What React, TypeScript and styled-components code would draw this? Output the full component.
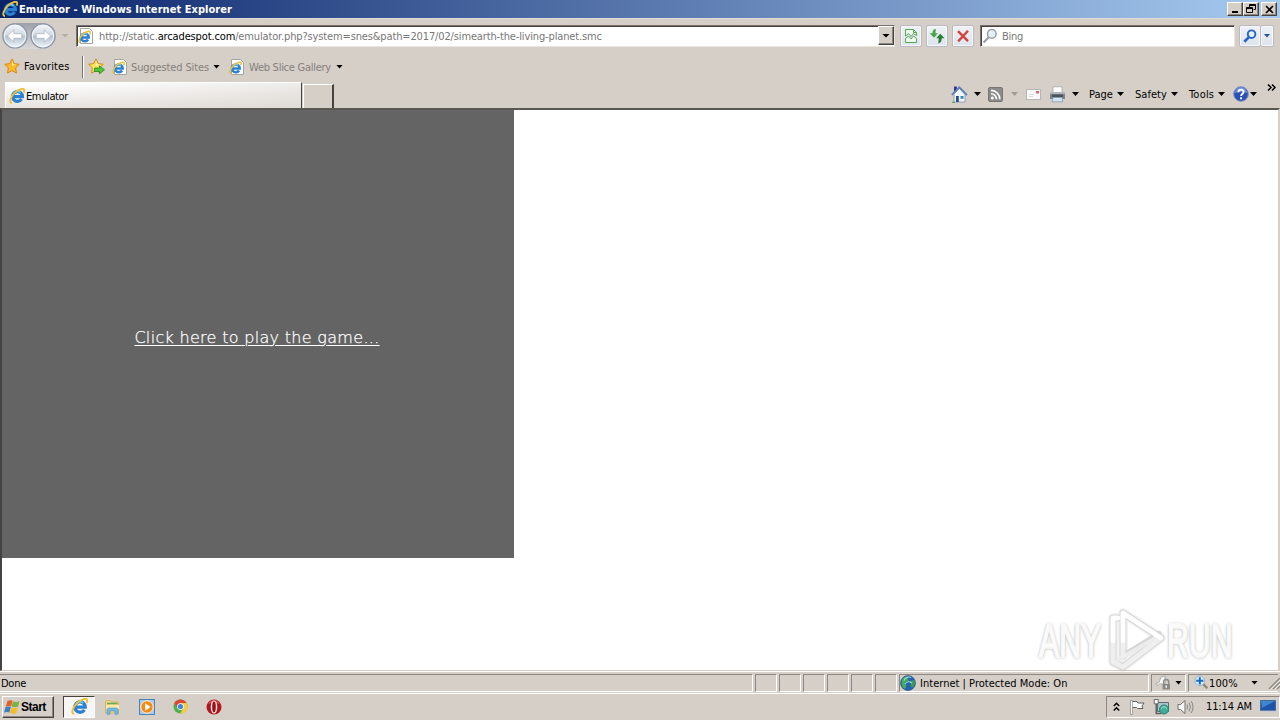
import React from 'react';
import styled, { createGlobalStyle, css } from 'styled-components';

const IeIcon = ({ size = 16, page = false }: { size?: number; page?: boolean }) => (
  <svg width={size} height={size} viewBox='0 0 16 16'>
    {page && <path d='M2.5.5h9l3 3v12h-12z' fill='#fff' stroke='#a5a5a0' />}
    <g transform={page ? 'translate(0 2.6) scale(.8)' : undefined}>
      <path
        d='M12.600 11.200a4.900 4.900 0 1 1 .8-2.600H5.200'
        fill='none'
        stroke='#2a80d2'
        strokeWidth='3.200'
      />
      <path d='M4 7.200a4.800 4.800 0 0 1 7.600-2.600' fill='none' stroke='#6ccaf6' strokeWidth='1.600' />
      <path
        d='M3 15C-.4 15 1.500 8.500 6.100 4.400C10 1 14.600-.3 15.200 1.900c.2.900-.2 1.900-.7 2.700'
        fill='none'
        stroke='#ecc03a'
        strokeWidth='1.900'
      />
    </g>
  </svg>
);

const StarIcon = ({ add = false }: { add?: boolean }) => (
  <svg width='17' height='17' viewBox='0 0 17 17'>
    <path
      d='M8 .9l2.200 4.700 5.100.7-3.700 3.600.9 5.200L8 12.600l-4.500 2.500.9-5.200L.7 6.300l5.100-.7z'
      fill={add ? '#fbe65c' : '#fbb829'}
      stroke='#d68a16'
    />
    <path d='M8 3l1.300 3.300 3 .5-4.300 1z' fill='#fff3a8' />
    {add && (
      <path d='M6.500 10h5V7.800l5 4-5 4v-2.300h-5z' fill='#55c43c' stroke='#208a23' strokeWidth='.8' />
    )}
  </svg>
);

const ArrowCircle = ({ forward = false }: { forward?: boolean }) => (
  <svg width='26' height='26' viewBox='0 0 26 26'>
    <defs>
      <linearGradient id='glass' x1='0' y1='0' x2='0' y2='1'>
        <stop offset='0' stopColor='#f4f6f9' />
        <stop offset='.46' stopColor='#d3dae3' />
        <stop offset='.5' stopColor='#b4c0ce' />
        <stop offset='1' stopColor='#eff8fc' />
      </linearGradient>
    </defs>
    <circle cx='13' cy='13' r='12' fill='url(#glass)' stroke='#8793a4' strokeWidth='1.2' />
    <circle cx='13' cy='13' r='10.700' fill='none' stroke='#f5f8fb' strokeWidth='1' />
    <path
      d='M5.500 13l6.300-6.200v3.900h8v4.600h-8v3.900z'
      fill='#fff'
      stroke='#a3afbd'
      strokeWidth='.7'
      transform={forward ? 'rotate(180 13 13)' : undefined}
    />
  </svg>
);

const CompatIcon = () => (
  <svg width='14' height='16' viewBox='0 0 14 16'>
    <path d='M1.500 1.500h8l3 3v3l-3-2-2.500 3-2.500-3-3 2.500z' fill='#eef8ec' stroke='#55a656' />
    <path d='M1.500 14.500v-4l3-2.500 2.500 3 2.500-3 3 2.500v4z' fill='#eef8ec' stroke='#55a656' />
    <path d='M9.500 1.500v3h3' fill='none' stroke='#55a656' />
  </svg>
);

const RefreshIcon = () => (
  <svg width='16' height='16' viewBox='0 0 16 16'>
    <path d='M6.800 1C4.200 1 3.500 3 3.500 5.300H.7L5 9.800l4-4.500H6.500c0-1.700.2-3 .3-4.300z' fill='#4aa44b' />
    <path d='M9.200 15.300c2.600 0 3.500-2.500 3.500-5h2.800l-4.300-4.500-4 4.500h2.500c0 1.700-.3 3.700-.5 5z' fill='#287d2e' />
  </svg>
);

const StopIcon = () => (
  <svg width='14' height='14' viewBox='0 0 14 14'>
    <path d='M2 2.200l10 10M12 1.800L2.200 12.400' stroke='#d2453e' strokeWidth='2.400' fill='none' />
  </svg>
);

const LensIcon = ({ color, fill, bold }: { color: string; fill: string; bold?: boolean }) => (
  <svg width={bold ? 14 : 16} height={bold ? 14 : 16} viewBox='0 0 16 16'>
    <path d='M6.800 9.200L1.500 14.600' stroke={color} strokeWidth={bold ? 3 : 2.2} />
    <circle cx='9.800' cy='5.900' r='4.300' fill={fill} stroke={color} strokeWidth={bold ? 2.2 : 1.5} />
    <path d='M7.600 5.200a2.600 2.600 0 0 1 2-1.700' fill='none' stroke='#fff' />
  </svg>
);

const HomeIcon = () => (
  <svg width='17' height='17' viewBox='0 0 17 17'>
    <path d='M3 .5h2.800V6H3z' fill='#2b3690' />
    <path d='M3 8l5.500-5.500L14 8.500V16H3z' fill='#f3f6fa' stroke='#7a90b2' strokeWidth='.8' />
    <path d='M.8 8.800L8.300 1.300l7.700 7.900' fill='none' stroke='#5b80b4' strokeWidth='1.800' />
    <path d='M5 10h2.800v6H5z' fill='#274b82' />
    <path d='M9.500 10h3v2.800h-3z' fill='#328fb6' />
    <path d='M1 16.300h3' stroke='#49a24a' />
  </svg>
);

const RssIcon = () => (
  <svg width='15' height='15' viewBox='0 0 15 15'>
    <rect x='.5' y='.5' width='14' height='14' rx='1.500' fill='#8d8c8a' stroke='#777573' />
    <circle cx='4.300' cy='10.900' r='1.500' fill='#fff' />
    <path d='M3 6.700a5.400 5.400 0 0 1 5.400 5.500M3 3.400a8.800 8.800 0 0 1 8.800 8.800' fill='none' stroke='#fff' strokeWidth='1.600' />
  </svg>
);

const MailIcon = () => (
  <svg width='15' height='11' viewBox='0 0 15 11'>
    <rect x='.5' y='.5' width='14' height='10' fill='#fbfafa' stroke='#b9b5b2' />
    <path d='M10 2h3v2.500h-3z' fill='#df6871' />
    <path d='M3 5.500h5M3 7.500h4' stroke='#dcdada' />
  </svg>
);

const PrinterIcon = () => (
  <svg width='17' height='17' viewBox='0 0 17 17'>
    <path d='M4 .8h9V7H4z' fill='#fff' stroke='#a7a8aa' strokeWidth='.8' />
    <path d='M1 6h15v7H1z' fill='#7c838b' />
    <path d='M1 6h15v2H1z' fill='#b0b6bb' />
    <path d='M3 8.500h11V11H3z' fill='#4b525a' />
    <path d='M4 11.500h9l1 4.300H3z' fill='#cfe4f5' stroke='#839cb3' strokeWidth='.8' />
  </svg>
);

const HelpIcon = () => (
  <svg width='16' height='16' viewBox='0 0 16 16'>
    <circle cx='8' cy='8' r='7.300' fill='#2b50b4' stroke='#7e91bd' />
    <path d='M2 7a6 6 0 0 1 12 0q-6-2-12 0z' fill='#6f90dc' />
    <path d='M5.400 6.300C5.400 2.800 10.800 2.900 10.600 6c-.1 1.700-2.500 1.900-2.500 4' fill='none' stroke='#fff' strokeWidth='1.800' />
    <path d='M7.100 11.300h2v2h-2z' fill='#fff' />
  </svg>
);

const GlobeIcon = () => (
  <svg width='16' height='16' viewBox='0 0 16 16'>
    <circle cx='8' cy='8' r='7.500' fill='#2463b0' stroke='#244f78' strokeWidth='.6' />
    <path d='M2.200 4.500C4 1.500 7 .8 9 1.500L7.500 4 9 5.500 5 8l1.500 3L5 14C1.500 12 .8 8 2.200 4.500z' fill='#45ac59' />
    <path d='M10 6l4.500-1c1 3 .3 5.500-1.700 7.500L10 11l1-2z' fill='#3c9b58' />
    <path d='M4 5.500a5 5 0 0 1 7-3M5 9q3-4 7-1' fill='none' stroke='#9adcf0' strokeWidth='1.100' />
  </svg>
);

const LockIcon = () => (
  <svg width='17' height='16' viewBox='0 0 17 16'>
    <path d='M.8 8.500l3.200-1 2-5.500 4-1v8H4.500L3 10.500z' fill='#f6f6f6' stroke='#a2a09e' strokeWidth='.8' />
    <path d='M8.700 9V7a2.500 2.500 0 0 1 5 0v2' fill='none' stroke='#8c8a88' strokeWidth='1.400' />
    <path d='M7.500 9h7.500v5.500H7.500z' fill='#8c8a88' />
    <path d='M10.500 10.500h1.500v2.300h-1.500z' fill='#eee' />
  </svg>
);

const ZoomIcon = () => (
  <svg width='15' height='15' viewBox='0 0 15 15'>
    <path d='M8.500 8.500l4.800 4.800' stroke='#8f8375' strokeWidth='2.200' />
    <circle cx='5.800' cy='5.800' r='4.800' fill='#d9edfb' stroke='#94b7d6' />
    <path d='M5.800 2.200v7.200M2.200 5.800h7.200' stroke='#1969c1' strokeWidth='2' />
  </svg>
);

const WindowsFlag = () => (
  <svg width='17' height='16' viewBox='0 0 17 16'>
    <path d='M3.500 2q2.500-1.600 5.100-.2L7 7.500q-2.600-1.200-5.300.2z' fill='#e3622a' />
    <path d='M9 2.200q2.800 1.300 6.500.1L14 7.800q-3.200 1-6.500-.2z' fill='#7cb241' />
    <path d='M1.500 8.300q2.500-1.400 5.300-.2l-1.500 5.500q-2.500-1.300-5.200.2z' fill='#3b7fc7' />
    <path d='M7.300 8.400q3.200 1.300 6.500.2l-1.600 5.600q-3 1.100-6.400-.2z' fill='#f4bd28' />
  </svg>
);

const FolderIcon = () => (
  <svg width='17' height='16' viewBox='0 0 17 16'>
    <path d='M1.500 2.500l1-1h4l1 1.500h7V14h-13z' fill='#f3d67c' stroke='#d2ad4e' strokeWidth='.8' />
    <path d='M3 4.500h10.500' stroke='#63a960' strokeWidth='1.500' />
    <path d='M2 6h13v4H2z' fill='#fbeaa9' />
    <path d='M3 15.300V11q0-2 2-2h7q2 0 2 2v4.300h-3V12H6v3.300z' fill='#72b8e5' stroke='#5196c5' strokeWidth='.6' />
  </svg>
);

const MediaIcon = () => (
  <svg width='16' height='16' viewBox='0 0 16 16'>
    <rect x='.5' y='.5' width='15' height='15' fill='#a8cbec' stroke='#4783bd' />
    <circle cx='8' cy='8' r='6.200' fill='#f58a16' stroke='#fff0d5' />
    <path d='M6.200 4.300l5.300 3.700-5.300 3.700z' fill='#fff' />
  </svg>
);

const ChromeIcon = () => (
  <svg width='15' height='15' viewBox='0 0 16 16'>
    <circle cx='8' cy='8' r='7.500' fill='#4caf50' />
    <path d='M1.500 4.250A7.500 7.500 0 0 1 14.500 4.250L8 5 4.900 9.800z' fill='#dc4638' />
    <path d='M14.500 4.250A7.500 7.500 0 0 1 7.700 15.500L11 9.700 8 4.500z' fill='#fccd35' />
    <circle cx='8' cy='8' r='3.600' fill='#fff' />
    <circle cx='8' cy='8' r='2.800' fill='#4285df' />
  </svg>
);

const OperaIcon = () => (
  <svg width='16' height='16' viewBox='0 0 16 16'>
    <circle cx='8' cy='8' r='7.500' fill='#b3151d' />
    <path d='M2 5a6.500 6.500 0 0 1 12 0q-6-2-12 0z' fill='#d6454a' />
    <ellipse cx='8' cy='8' rx='3.300' ry='6.600' fill='#f5e9e9' />
    <ellipse cx='8' cy='8' rx='1.800' ry='5.400' fill='#941118' />
  </svg>
);

const FlagIcon = () => (
  <svg width='17' height='16' viewBox='0 0 17 16'>
    <path d='M2.500 1.500v14M2.500 2.500h5.500l1 1.500h6l-2 3 1 2.500H8.500l-1-1h-5z' fill='#fff' stroke='#63615e' />
    <path d='M1.500 1.500h2v14h-2z' fill='#fff' stroke='#77756f' strokeWidth='.6' />
  </svg>
);

const NetworkIcon = () => (
  <svg width='17' height='16' viewBox='0 0 17 16'>
    <path d='M4.500 3.500h11v9h-11z' fill='#a8c5ce' stroke='#5d6a6e' />
    <path d='M1.200.5h4v4.300h-4z' fill='#fff' stroke='#5b5e5e' strokeWidth='.9' />
    <path d='M3.200 5v9.500h5' fill='none' stroke='#5b5e5e' strokeWidth='1.400' />
    <circle cx='11' cy='10.500' r='4.500' fill='#3fae98' stroke='#2a7d73' />
    <path d='M8 9.500q3-3.500 6 0' fill='none' stroke='#a9ecd3' />
  </svg>
);

const SpeakerIcon = () => (
  <svg width='17' height='16' viewBox='0 0 17 16'>
    <path d='M1 5.500h2.500l4.500-4v13l-4.500-4H1z' fill='#f6f6f6' stroke='#73716d' />
    <path d='M10 5.500q1.500 2.500 0 5M12 3.500q3 4.500 0 9M14.200 2q3.600 6 0 12' fill='none' stroke='#8a8884' />
  </svg>
);

const DesktopIcon = () => (
  <svg width='16' height='13' viewBox='0 0 16 13'>
    <path d='M.5.500h15v10H.5z' fill='#1c55a9' stroke='#4a6a94' />
    <path d='M1 1h14L2 8z' fill='#3e86d2' />
    <path d='M1 11.500h14' stroke='#c1cbd5' strokeWidth='1.500' />
  </svg>
);

const PlayLogo = () => (
  <svg width='62' height='68' viewBox='0 0 62 68'>
    <g fill='none' strokeLinejoin='round' strokeLinecap='round'>
      <path d='M18 51V8l38 25-38 29L8 57V13h5' stroke='#000' strokeOpacity='.05' strokeWidth='10' />
      <g stroke='#d6d6d6'>
        <path d='M18 51V8l38 25-38 29L8 57V13h5' strokeWidth='7' />
        <path d='M18 51l36-22' strokeWidth='6' />
      </g>
      <path d='M13 55l5-3 36-21' stroke='#ececec' strokeWidth='4' />
      <path d='M18 51V8l38 25-38 29L8 57V13h5' stroke='#efefef' strokeWidth='5' />
      <path d='M8 36V13h5M18 36V8l38 25' stroke='#fff' strokeWidth='4.500' />
    </g>
  </svg>
);

const App = () => (
  <Screen>
    <GlobalStyle />
    <TitleBar>
      <IeIcon />
      <Label $w={1208} $bold $color='#fff' $ml={1} $ls={0.05} $top={1}>
        Emulator - Windows Internet Explorer
      </Label>
      <WindowButton>
        <svg width='9' height='9'><path d='M1 7h6' stroke='#000' strokeWidth='2' /></svg>
      </WindowButton>
      <WindowButton>
        <svg width='10' height='10'>
          <path d='M3.500 3V.500h6v5H7.500M3 1.500h7M.500 3.500h6v5h-6zM0 4.500h7' fill='none' stroke='#000' />
        </svg>
      </WindowButton>
      <WindowButton $ml={2}>
        <svg width='9' height='9'><path d='M1 1l7 7M8 1L1 8' stroke='#000' strokeWidth='1.600' /></svg>
      </WindowButton>
    </TitleBar>

    <NavBar>
      <TravelButtons>
        <ArrowCircle />
        <ArrowCircle forward />
      </TravelButtons>
      <Caret $ml={5} $color='#b4ada6' $big />
      <Field $w={819} $ml={7}>
        <IeIcon page />
        <Label $w={787} $color='#777' $ml={5} $ls={-0.14} $top={2}>
          http://static.<b>arcadespot.com</b>/emulator.php?system=snes&amp;path=2017/02/simearth-the-living-planet.smc
        </Label>
        <DropButton><Caret $big /></DropButton>
      </Field>
      <ToolButton $ml={5}><CompatIcon /></ToolButton>
      <ToolButton $ml={4}><RefreshIcon /></ToolButton>
      <ToolButton $ml={4}><StopIcon /></ToolButton>
      <Field $w={255} $ml={6}>
        <LensIcon color='#9a9fa8' fill='#e2eff8' />
        <Label $w={100} $color='#777' $ml={4} $ls={-0.3} $top={2}>Bing</Label>
      </Field>
      <ToolButton $ml={4}><LensIcon color='#2664c7' fill='#e3effc' bold /></ToolButton>
      <ToolButton $w={13} $attached><Caret $color='#2456a5' /></ToolButton>
    </NavBar>

    <FavoritesBar>
      <StarIcon />
      <Label $w={58} $ml={3} $ls={0.1}>Favorites</Label>
      <Divider />
      <StarIcon add />
      <Spacer $w={7} />
      <IeIcon page />
      <Label $w={82} $color='#85807a' $ml={3} $ls={-0.13} $top={2}>Suggested Sites</Label>
      <Caret />
      <Spacer $w={9} />
      <IeIcon page />
      <Label $w={87} $color='#85807a' $ml={4} $ls={-0.26} $top={2}>Web Slice Gallery</Label>
      <Caret />
    </FavoritesBar>

    <TabRow>
      <Tab>
        <IeIcon />
        <Label $w={60} $ml={1} $ls={-0.38} $top={3}>Emulator</Label>
      </Tab>
      <NewTab />
      <CommandBar>
        <HomeIcon />
        <Caret $ml={6} />
        <Spacer $w={7} />
        <RssIcon />
        <Caret $ml={8} $color='#9f9a94' />
        <Spacer $w={8} />
        <MailIcon />
        <Spacer $w={8} />
        <PrinterIcon />
        <Caret $ml={6} />
        <Label $w={28} $ml={10} $ls={0} $top={1}>Page</Label>
        <Caret />
        <Label $w={36} $ml={11} $ls={0.05} $top={1}>Safety</Label>
        <Caret />
        <Label $w={29} $ml={11} $ls={0.2} $top={1}>Tools</Label>
        <Caret />
        <Spacer $w={8} />
        <HelpIcon />
        <Caret $ml={1} />
        <Chevron>
          <svg width='9' height='7'><path d='M1 .5l3 3-3 3M5 .5l3 3-3 3' fill='none' stroke='#000' strokeWidth='1.500' /></svg>
        </Chevron>
      </CommandBar>
    </TabRow>

    <Viewport>
      <GameFrame>
        <PlayLink>Click here to play the game...</PlayLink>
      </GameFrame>
    </Viewport>

    <StatusBar>
      <Pane $w={753} $first><Label $w={60} $ml={1} $ls={-0.25} $top={3}>Done</Label></Pane>
      {[0, 1, 2, 3, 4, 5].map((i) => (
        <Pane key={i} $w={22} />
      ))}
      <Pane $w={250}>
        <GlobeIcon />
        <Label $w={180} $ml={4} $ls={0.02} $top={3}>Internet | Protected Mode: On</Label>
      </Pane>
      <Pane $w={35}>
        <Spacer $w={3} />
        <LockIcon />
        <Caret $ml={3} />
      </Pane>
      <Pane $w={90} $open>
        <Spacer $w={5} />
        <ZoomIcon />
        <Label $w={42} $ls={0.1} $top={3}>100%</Label>
        <Caret />
        <Spacer $w={9} />
        <svg width='14' height='14'>
          <path d='M2 13L13 2M6 13l7-7M10 13l3-3' stroke='#8d8984' strokeWidth='1.400' />
          <path d='M3.500 13.500l10-10M7.500 13.500l6-6' stroke='#fff' strokeWidth='.7' />
        </svg>
      </Pane>
    </StatusBar>

    <Taskbar>
      <StartButton>
        <WindowsFlag />
        <Label $w={30} $bold $size={12} $ls={-0.5}>Start</Label>
      </StartButton>
      <ActiveTask><IeIcon size={17} /></ActiveTask>
      <Launchers>
        <FolderIcon />
        <MediaIcon />
        <ChromeIcon />
        <OperaIcon />
      </Launchers>
      <Tray>
        <svg width='7' height='10'><path d='M.8 4l2.700-2.700L6.200 4M.8 8.500l2.700-2.700 2.700 2.700' fill='none' stroke='#000' strokeWidth='1.500' /></svg>
        <Spacer $w={9} />
        <FlagIcon />
        <Spacer $w={7} />
        <NetworkIcon />
        <Spacer $w={7} />
        <SpeakerIcon />
        <Label $w={54} $ml={12} $ls={-0.12} $top={1}>11:14 AM</Label>
        <DesktopIcon />
      </Tray>
    </Taskbar>

    <Watermark>
      <Brand>ANY</Brand>
      <PlayLogo />
      <Brand>RUN</Brand>
    </Watermark>
  </Screen>
);

const GlobalStyle = createGlobalStyle`
  * {
    box-sizing: border-box;
  }
  body {
    margin: 0;
    overflow: hidden;
  }
  svg {
    display: block;
    flex-shrink: 0;
  }
`;

const Screen = styled.div`
  position: relative;
  display: flex;
  flex-direction: column;
  width: 1280px;
  height: 720px;
  overflow: hidden;
  background: #d5cfc8;
  color: #000;
  font-family: 'DejaVu Sans Condensed', 'DejaVu Sans', sans-serif;
  font-stretch: condensed;
  font-size: 11px;
`;

const Label = styled.span<{
  $w: number;
  $ml?: number;
  $ls?: number;
  $size?: number;
  $top?: number;
  $bold?: boolean;
  $color?: string;
}>`
  flex: none;
  width: ${(p) => p.$w}px;
  margin-left: ${(p) => p.$ml || 0}px;
  padding-top: ${(p) => p.$top || 0}px;
  letter-spacing: ${(p) => p.$ls || 0}px;
  font-size: ${(p) => p.$size || 11}px;
  font-weight: ${(p) => (p.$bold ? 700 : 400)};
  color: ${(p) => p.$color || '#000'};
  line-height: 14px;
  text-align: left;
  white-space: nowrap;
  b {
    font-weight: 400;
    color: #000;
  }
`;

const Spacer = styled.i<{ $w: number }>`
  flex: none;
  width: ${(p) => p.$w}px;
`;

const Caret = styled.i<{ $ml?: number; $color?: string; $big?: boolean }>`
  flex: none;
  width: ${(p) => (p.$big ? 8 : 7)}px;
  height: 4px;
  margin-left: ${(p) => p.$ml || 0}px;
  background: ${(p) => p.$color || '#000'};
  clip-path: polygon(0 0, 100% 0, 50% 100%);
`;

const row = css`
  display: flex;
  flex: none;
  align-items: center;
`;

const raised = css`
  border: 1px solid;
  border-color: #fff #45423f #45423f #fff;
  box-shadow: inset -1px -1px #8c8780;
`;

const TitleBar = styled.header`
  ${row}
  height: 18px;
  padding-left: 2px;
  background: linear-gradient(90deg, #0a246a, #a6caf0);
`;

const WindowButton = styled.button<{ $ml?: number }>`
  ${row}
  ${raised}
  justify-content: center;
  width: 16px;
  height: 14px;
  margin-left: ${(p) => p.$ml || 0}px;
  padding: 0;
  background: #d5cfc8;
`;

const NavBar = styled.nav`
  ${row}
  height: 34px;
  padding-left: 2px;
  border-top: 1px solid #e0dcd6;
`;

const TravelButtons = styled.div`
  ${row}
  gap: 2px;
  width: 54px;
  height: 26px;
  border-radius: 13px;
  background: linear-gradient(#9da1a8, #d9d9d9);
`;

const Field = styled.div<{ $w: number; $ml: number }>`
  ${row}
  width: ${(p) => p.$w}px;
  height: 22px;
  margin-left: ${(p) => p.$ml}px;
  padding-left: 1px;
  border: 1px solid;
  border-color: #77716b #e8e4df #e8e4df #77716b;
  box-shadow: inset 1px 1px #45423f;
  background: #fff;
`;

const DropButton = styled.button`
  ${row}
  ${raised}
  justify-content: center;
  width: 16px;
  height: 19px;
  margin-left: -8px;
  padding: 0;
  background: #d5cfc8;
`;

const ToolButton = styled.button<{ $ml?: number; $w?: number; $attached?: boolean }>`
  ${row}
  justify-content: center;
  width: ${(p) => p.$w || 22}px;
  height: 22px;
  margin-left: ${(p) => p.$ml || 0}px;
  padding: 0;
  border: 1px solid #b9bbc0;
  border-left-width: ${(p) => (p.$attached ? 0 : 1)}px;
  border-radius: 2px;
  box-shadow: inset 0 0 0 1px #f7f8fa;
  background: linear-gradient(#eff1f4, #dee4ed);
`;

const FavoritesBar = styled.div`
  ${row}
  height: 29px;
  padding-left: 4px;
`;

const Divider = styled.i`
  width: 2px;
  height: 22px;
  margin-right: 4px;
  border-left: 1px solid #77716b;
  border-right: 1px solid #fff;
`;

const TabRow = styled.div`
  ${row}
  align-items: flex-end;
  height: 27px;
  padding-left: 5px;
`;

const Tab = styled.div`
  ${row}
  width: 297px;
  height: 26px;
  padding-left: 3px;
  border: 1px solid #fff;
  border-right: 1px solid #45423f;
  border-bottom: 0;
  background: linear-gradient(90deg, transparent 20%, #d5cfc866), linear-gradient(#fff, #e6e3de);
`;

const NewTab = styled.div`
  width: 31px;
  height: 24px;
  margin-left: 1px;
  border: 1px solid #fff;
  border-right: 2px solid #45423f;
  border-bottom: 0;
`;

const CommandBar = styled.div`
  ${row}
  height: 28px;
  margin-left: 617px;
`;

const Chevron = styled.span`
  margin-left: 10px;
  padding-bottom: 13px;
`;

const Viewport = styled.main`
  flex: none;
  height: 563px;
  border: 2px solid;
  border-color: #5b5854 #d5cfc8 #d5cfc8 #45423f;
  border-bottom-width: 1px;
  background: #fff;
`;

const GameFrame = styled.div`
  ${row}
  justify-content: center;
  width: 512px;
  height: 448px;
  padding: 6px 2px 0 0;
  background: #646464;
`;

const PlayLink = styled.a`
  color: #fff;
  font-family: 'DejaVu Sans', sans-serif;
  font-stretch: normal;
  font-weight: 200;
  font-size: 16px;
  letter-spacing: 0.31px;
  -webkit-text-stroke: 0.25px #fff;
  text-decoration: underline;
  text-underline-offset: 2px;
  text-decoration-thickness: 1px;
  white-space: nowrap;
`;

const StatusBar = styled.footer`
  ${row}
  gap: 2px;
  height: 22px;
  border-top: 1px solid #fff;
`;

const Pane = styled.div<{ $w: number; $first?: boolean; $open?: boolean }>`
  ${row}
  width: ${(p) => p.$w}px;
  height: 18px;
  border: 1px solid;
  border-color: #8c8780 #fff #fff #8c8780;
  border-left-width: ${(p) => (p.$first ? 0 : 1)}px;
  border-right-width: ${(p) => (p.$open ? 0 : 1)}px;
`;

const Taskbar = styled.footer`
  ${row}
  height: 27px;
  padding: 0 0 1px 2px;
  border-top: 1px solid #fff;
`;

const StartButton = styled.button`
  ${row}
  ${raised}
  width: 52px;
  height: 22px;
  padding: 0 0 0 1px;
  background: #d5cfc8;
`;

const ActiveTask = styled.div`
  ${row}
  justify-content: center;
  width: 32px;
  height: 22px;
  margin-left: 9px;
  border: 1px solid;
  border-color: #45423f #fff #fff #45423f;
  background: #f7f6f4;
`;

const Launchers = styled.div`
  ${row}
  gap: 18px;
  margin-left: 9px;
`;

const Tray = styled.div`
  ${row}
  width: 174px;
  height: 22px;
  margin-left: auto;
  padding-left: 6px;
  border: 1px solid;
  border-color: #8c8780 #fff #fff #8c8780;
`;

const Watermark = styled.div`
  ${row}
  position: absolute;
  left: 1039px;
  top: 605px;
`;

const Brand = styled.span`
  width: 66px;
  padding-top: 4px;
  font-family: 'Liberation Sans', sans-serif;
  font-stretch: normal;
  font-weight: 400;
  font-size: 48px;
  line-height: 50px;
  color: #fff;
  -webkit-text-stroke: 2.5px #f8f8f8;
  text-shadow: 0 0 3px #999, 0 1px 4px #b4b4b4;
  transform: scaleX(0.63);
  transform-origin: left;
`;

export default App;
